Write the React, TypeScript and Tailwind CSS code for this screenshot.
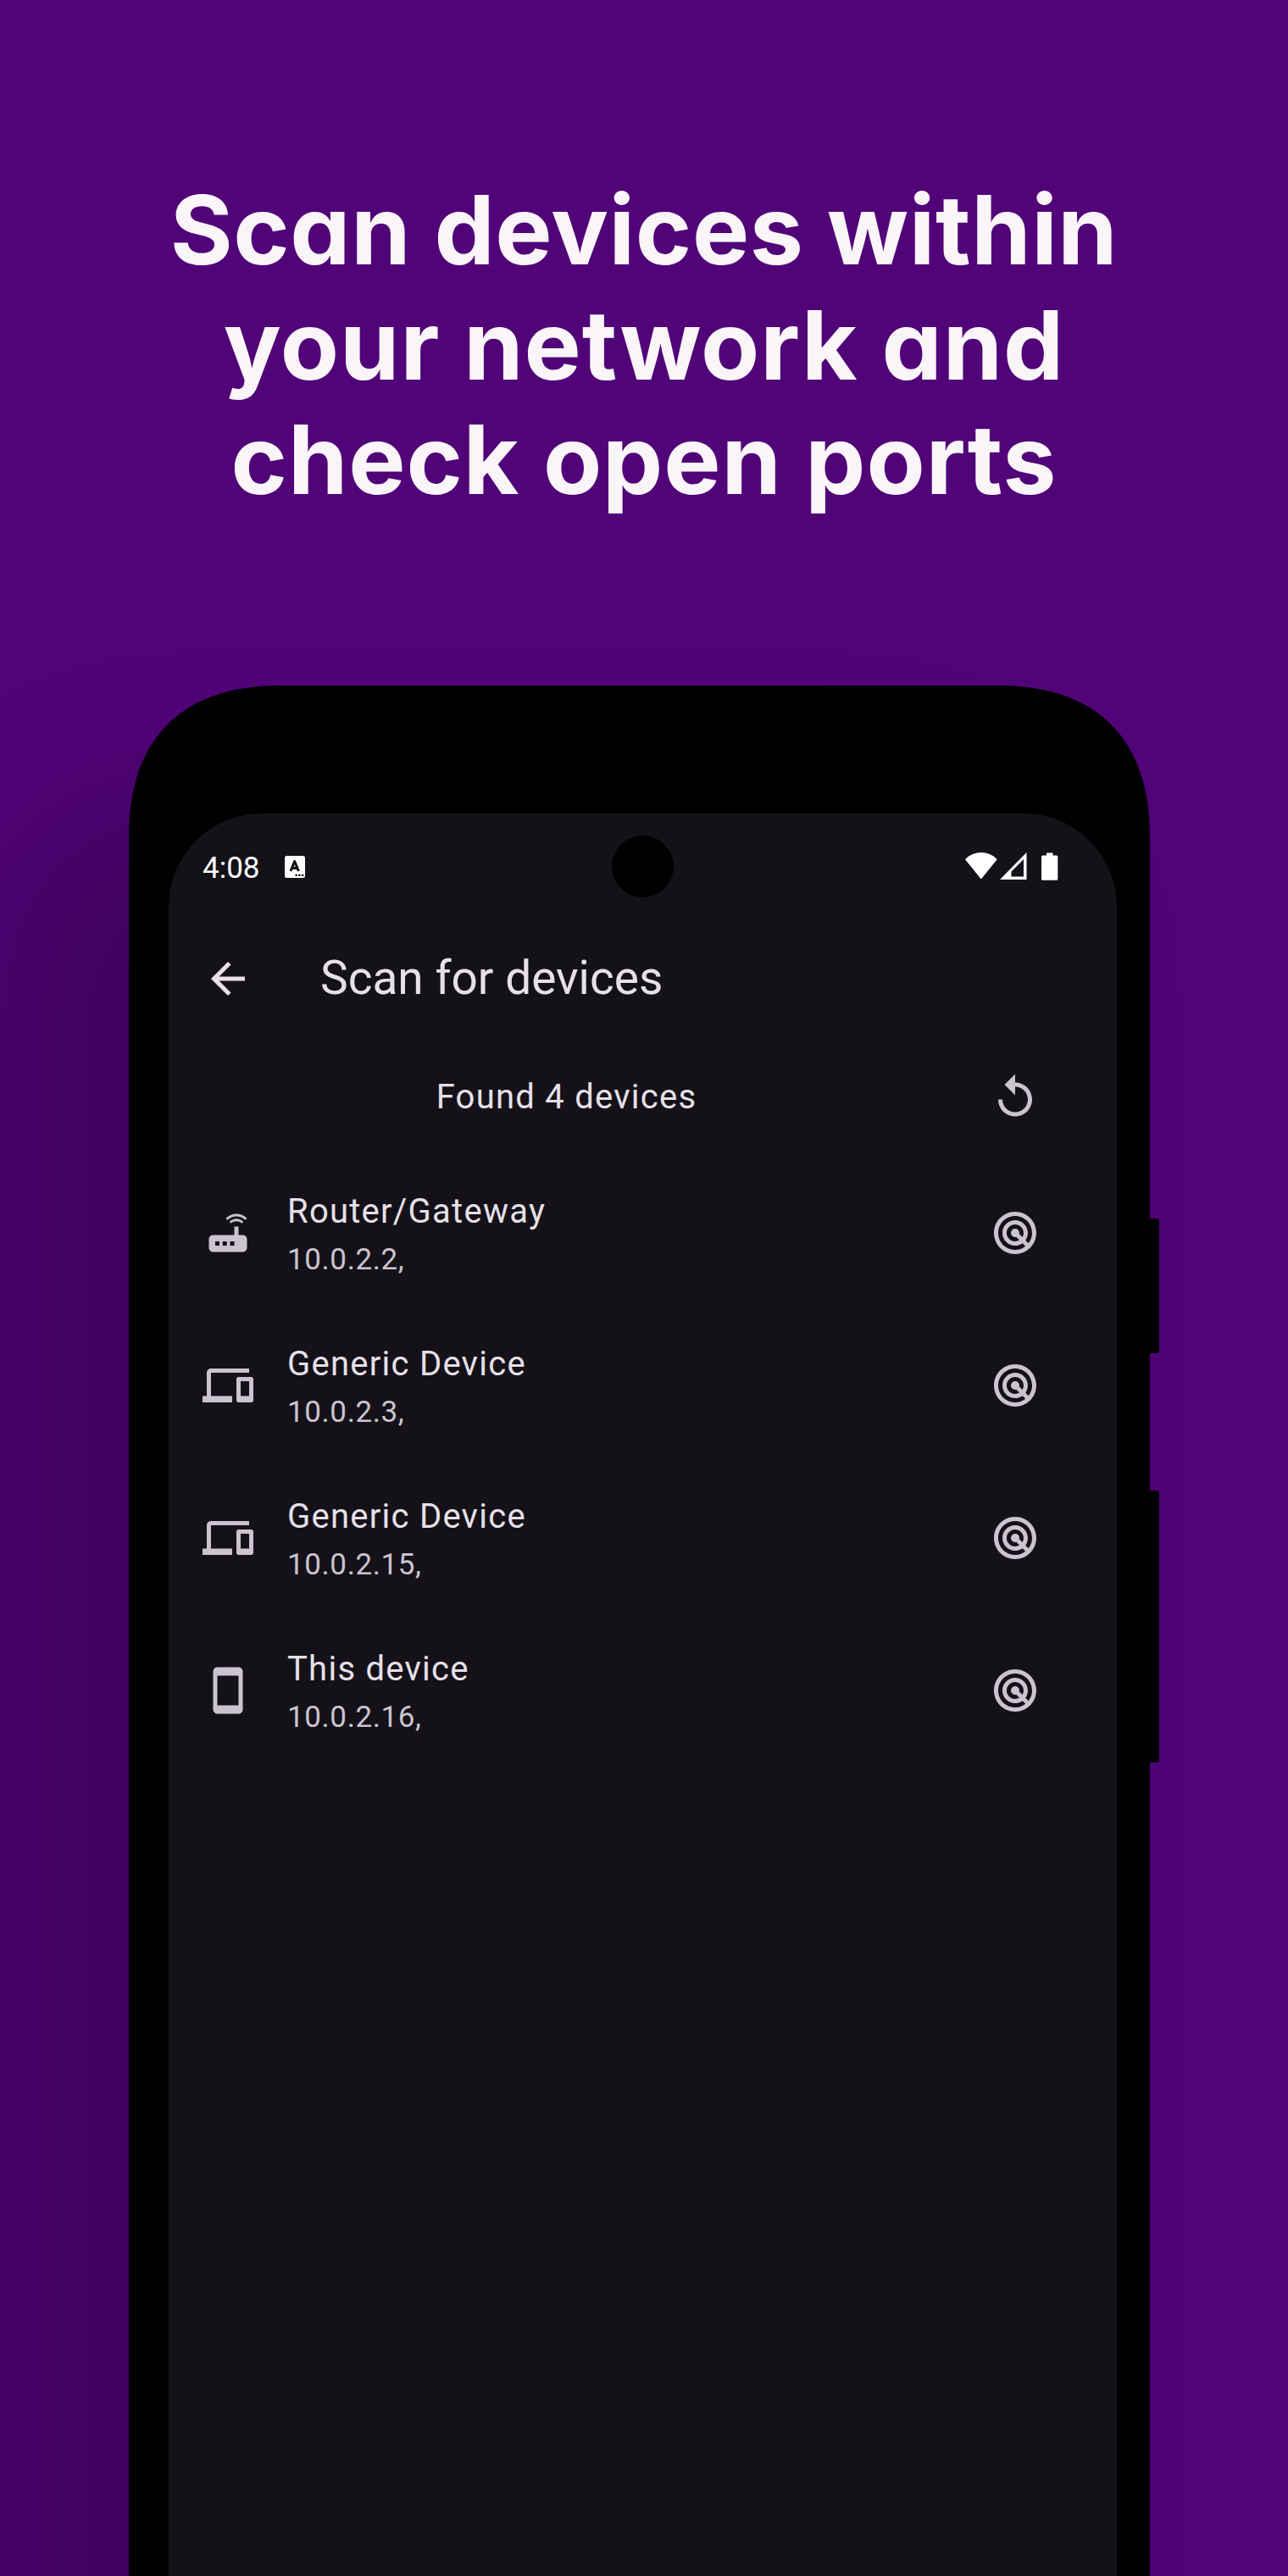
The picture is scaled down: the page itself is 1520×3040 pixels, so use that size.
import type { ReactNode } from "react";
import { MdArrowBack, MdDevices, MdRadar, MdReplay, MdRouter, MdSmartphone } from "react-icons/md";

type Device = { name: string; address: string; icon: ReactNode };

const devices: Device[] = [
  { name: "Router/Gateway", address: "10.0.2.2,", icon: <MdRouter className="size-[60px]" /> },
  { name: "Generic Device", address: "10.0.2.3,", icon: <MdDevices className="size-[60px]" /> },
  { name: "Generic Device", address: "10.0.2.15,", icon: <MdDevices className="size-[60px]" /> },
  { name: "This device", address: "10.0.2.16,", icon: <MdSmartphone className="size-[60px]" /> },
];

function KeyboardBadge() {
  return (
    <svg className="h-[26px] w-6" viewBox="0 0 24 26">
      <rect width="24" height="26" rx="2.5" fill="#fff" />
      <path d="M7 18 11.7 6.5 16.4 18M8.6 14.4h6.2" fill="none" stroke="#141218" strokeWidth="3" strokeLinejoin="round" />
      <path d="M12.5 21.8h2.4v2.2h-2.4zM16.2 21.8h2.4v2.2h-2.4zM19.9 21.8h2.4v2.2h-2.4z" fill="#141218" />
    </svg>
  );
}

function StatusIcons() {
  return (
    <svg className="h-[34px] w-[110px]" viewBox="0 0 110 34" fill="#fff">
      <path d="M0 8.2C10.5-2.6 27.200-2.600 37.700 8.200L18.850 31.500Z" />
      <path fillRule="evenodd" d="M41 32 72.500 0V32ZM54.500 28.500H69V8L54.500 22.500Z" />
      <path d="M96 0.500h7.500V3.500h4.200q1.600 0 1.600 1.600V31.200q0 1.600-1.600 1.600H91.600q-1.600 0-1.600-1.600V5.100q0-1.600 1.600-1.600H96Z" />
    </svg>
  );
}

function StatusBar() {
  return (
    <div className="relative flex h-[125px] items-center pl-[40px] pr-[69px] text-white">
      <span className="w-[97px] pt-[4px] text-[35px] leading-[50px]">4:08</span>
      <KeyboardBadge />
      <div className="ml-auto">
        <StatusIcons />
      </div>
      <div className="absolute left-[523px] top-[26px] size-[73px] rounded-full bg-black" />
    </div>
  );
}

function DeviceRow({ device }: { device: Device }) {
  return (
    <li className="flex h-[180px] items-center pl-[40px] pr-[90px]">
      <span className="text-[#cac4d0]">{device.icon}</span>
      <div className="ml-[40px] flex-1">
        <div className="text-[40px] leading-[60px] tracking-[1.25px]">{device.name}</div>
        <div className="-mb-[2px] pt-[2px] text-[35px] leading-[50px] tracking-[0.6px] text-[#cac4d0]">{device.address}</div>
      </div>
      <MdRadar className="size-[60px] text-[#cac4d0]" />
    </li>
  );
}

function Phone() {
  return (
    <div className="relative ml-[152px] h-[2231px] w-[1205px]">
      <div className="absolute left-0 top-0 h-[2600px] w-[1205px] rounded-[178px] shadow-[-150px_145px_190px_0_rgba(0,0,0,0.23)]" />
      <div className="absolute left-[1200px] top-[629px] h-[159px] w-4 rounded-r-[3px] bg-black" />
      <div className="absolute left-[1200px] top-[950px] h-[321px] w-4 rounded-r-[3px] bg-black" />
      <div className="absolute inset-0 bg-black [clip-path:path('M0_178C0_63_63_0_178_0H1027C1142_0_1205_63_1205_178V2231H0Z')]" />
      <div className="relative h-full pl-[47px] pr-[39px] pt-[151px]">
        <main className="h-full overflow-hidden rounded-t-[110px] bg-[#141218] text-[#e6e0e9]">
          <StatusBar />
          <header className="flex h-[140px] items-center pl-[40px]">
            <MdArrowBack className="size-[60px]" />
            <h2 className="ml-[79px] pb-[2px] text-[55px] leading-[70px]">Scan for devices</h2>
          </header>
          <div className="flex h-[140px] items-center pl-[40px] pr-[90px]">
            <p className="mr-[70px] flex-1 text-center text-[40px] leading-[60px] tracking-[1.25px]">Found 4 devices</p>
            <MdReplay className="size-[60px] text-[#cac4d0]" />
          </div>
          <ul>
            {devices.map((device) => (
              <DeviceRow key={device.address} device={device} />
            ))}
          </ul>
        </main>
      </div>
    </div>
  );
}

export default function App() {
  return (
    <div className="h-[3040px] w-[1520px] overflow-hidden bg-[#510378] font-['Roboto',sans-serif]">
      <h1 className="h-[809px] pt-[204px] text-center font-['Inter',sans-serif] text-[113px] font-bold leading-[135.5px] text-[#f9f5f8] [font-feature-settings:'cv11']">
        <span className="block tracking-[0.6px]">Scan devices within</span>
        <span className="block tracking-[1px]">your network and</span>
        <span className="block tracking-[0.9px]">check open ports</span>
      </h1>
      <Phone />
    </div>
  );
}
